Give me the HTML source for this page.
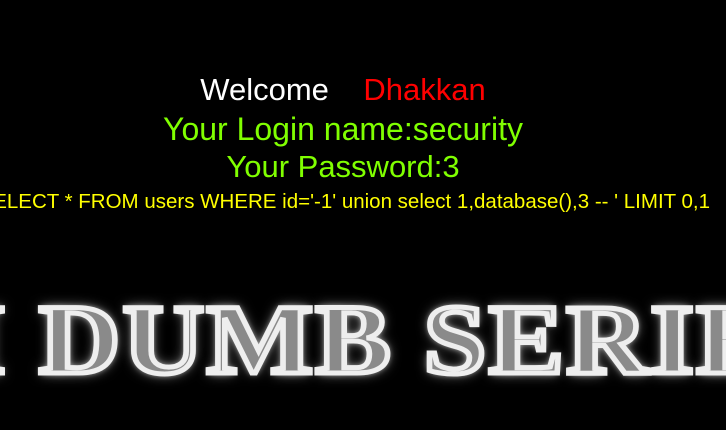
<!DOCTYPE html>
<html><head><meta charset="utf-8"><style>
html,body{margin:0;padding:0;background:#000;width:726px;height:430px;overflow:hidden;position:relative;font-family:"Liberation Sans",sans-serif}
.l{position:absolute;white-space:nowrap;line-height:1}
.c{left:343px;transform:translateX(-50%)}
.g{color:#80ff00}
.big{position:absolute;top:290px;white-space:nowrap;font-family:"Liberation Serif",serif;font-weight:bold;font-size:100px;line-height:1;color:#8a8a8a;-webkit-text-stroke:5px #eee;text-shadow:0 0 6px #fff,0 0 12px #aaa;transform:scaleX(1.13);transform-origin:0 0;letter-spacing:2px}
</style></head><body>
<div class="l c" style="top:74px;font-size:31px"><span style="color:#fff">Welcome</span>&nbsp;&nbsp;&nbsp;&nbsp;<span style="color:#f00">Dhakkan</span></div>
<div class="l c g" style="top:113px;font-size:32px">Your Login name:security</div>
<div class="l c g" style="top:151px;font-size:31px">Your Password:3</div>
<div class="l" style="top:192px;right:16px;color:#ff0;font-size:20.5px">SELECT * FROM users WHERE id='-1' union select 1,database(),3 -- ' LIMIT 0,1</div>
<div class="big" style="left:-38px">I DUMB SERIES</div>
</body></html>
